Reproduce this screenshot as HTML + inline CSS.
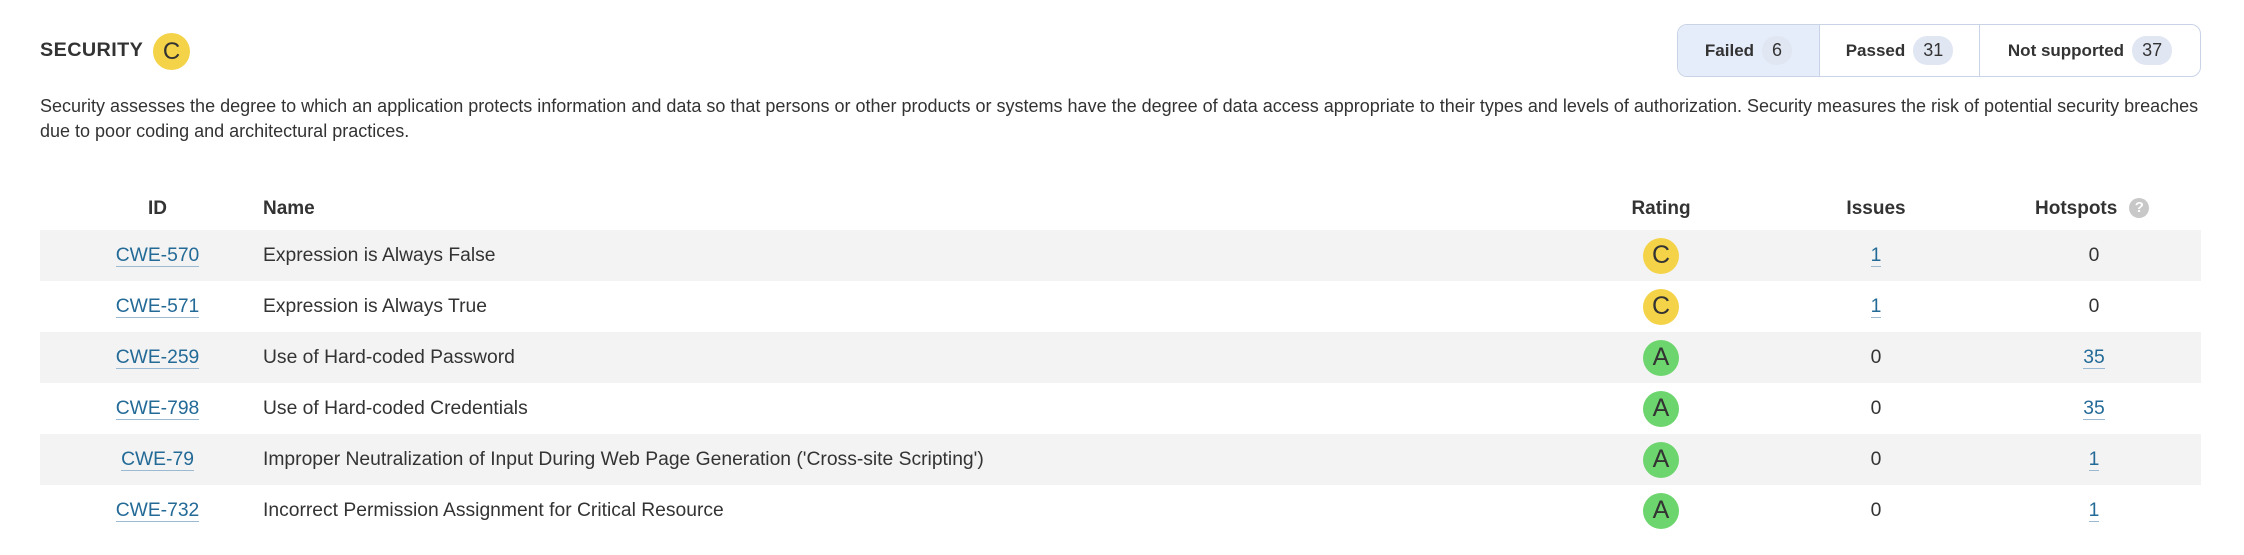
<!DOCTYPE html>
<html><head><meta charset="utf-8"><style>
*{box-sizing:border-box;margin:0;padding:0}
body{width:2244px;height:555px;background:#fff;font-family:"Liberation Sans",Arial,sans-serif;color:#333;position:relative;overflow:hidden}
.abs{position:absolute}
.h{left:40px;top:39px;font-size:19.8px;font-weight:bold;letter-spacing:.4px;color:#333}
.badge{display:inline-flex;align-items:center;justify-content:center;border-radius:50%;color:#333}
.big{left:153px;top:33px;width:37px;height:37px;background:#f4d348;font-size:24px}
.desc{left:40px;top:94px;width:2180px;font-size:18px;line-height:25px;color:#333}
.tabs{left:1677px;top:24px;width:524px;height:53px;border:1.5px solid #c9d3e6;border-radius:10px;display:flex;overflow:hidden}
.tab{display:flex;align-items:center;justify-content:center;font-size:17px;font-weight:bold;color:#333;border-right:1.5px solid #c9d3e6}
.tab:last-child{border-right:none}
.cnt{display:inline-block;background:#e1e6f3;border-radius:14px;padding:4px 10px;margin-left:8px;font-weight:normal;font-size:18px}
table{position:absolute;left:40px;top:186px;width:2161px;border-collapse:collapse;font-size:19.3px;table-layout:fixed}
th{font-weight:bold;height:44px;text-align:center;vertical-align:middle;padding-top:2px;font-size:19px}
td{height:51px;text-align:center;vertical-align:middle}
tr.g td{background:#f3f3f3}
.l{text-align:left}
.id{padding-left:12px}
.hs{padding-right:64px}
a{color:#236a97;text-decoration:none;border-bottom:1.5px solid #9bbad2}
.r{width:36px;height:36px;font-size:25px}
.C{background:#f4d348}.A{background:#6dd56d}
.q{display:inline-flex;width:20px;height:20px;border-radius:50%;background:#c8c8c8;color:#fff;font-size:15px;align-items:center;justify-content:center;vertical-align:middle;margin-left:12px;position:relative;top:-1px}
</style></head><body>
<div class="abs h">SECURITY</div>
<div class="abs badge big">C</div>
<div class="abs tabs">
<div class="tab" style="width:142px;background:#e6edfa">Failed<span class="cnt">6</span></div>
<div class="tab" style="width:160px">Passed<span class="cnt">31</span></div>
<div class="tab" style="flex:1">Not supported<span class="cnt">37</span></div>
</div>
<div class="abs desc">Security assesses the degree to which an application protects information and data so that persons or other products or systems have the degree of data access appropriate to their types and levels of authorization. Security measures the risk of potential security breaches due to poor coding and architectural practices.</div>
<table>
<colgroup><col style="width:223px"><col style="width:1358px"><col style="width:80px"><col style="width:350px"><col style="width:150px"></colgroup>
<tr><th class="id">ID</th><th class="l">Name</th><th>Rating</th><th>Issues</th><th class="l" style="white-space:nowrap"><span style="position:relative;left:-16px">Hotspots<span class="q">?</span></span></th></tr>
<tr class="g"><td class="id"><a>CWE-570</a></td><td class="l">Expression is Always False</td><td><span class="badge r C">C</span></td><td><a>1</a></td><td class="hs">0</td></tr>
<tr><td class="id"><a>CWE-571</a></td><td class="l">Expression is Always True</td><td><span class="badge r C">C</span></td><td><a>1</a></td><td class="hs">0</td></tr>
<tr class="g"><td class="id"><a>CWE-259</a></td><td class="l">Use of Hard-coded Password</td><td><span class="badge r A">A</span></td><td>0</td><td class="hs"><a>35</a></td></tr>
<tr><td class="id"><a>CWE-798</a></td><td class="l">Use of Hard-coded Credentials</td><td><span class="badge r A">A</span></td><td>0</td><td class="hs"><a>35</a></td></tr>
<tr class="g"><td class="id"><a>CWE-79</a></td><td class="l">Improper Neutralization of Input During Web Page Generation ('Cross-site Scripting')</td><td><span class="badge r A">A</span></td><td>0</td><td class="hs"><a>1</a></td></tr>
<tr><td class="id"><a>CWE-732</a></td><td class="l">Incorrect Permission Assignment for Critical Resource</td><td><span class="badge r A">A</span></td><td>0</td><td class="hs"><a>1</a></td></tr>
</table>
</body></html>
